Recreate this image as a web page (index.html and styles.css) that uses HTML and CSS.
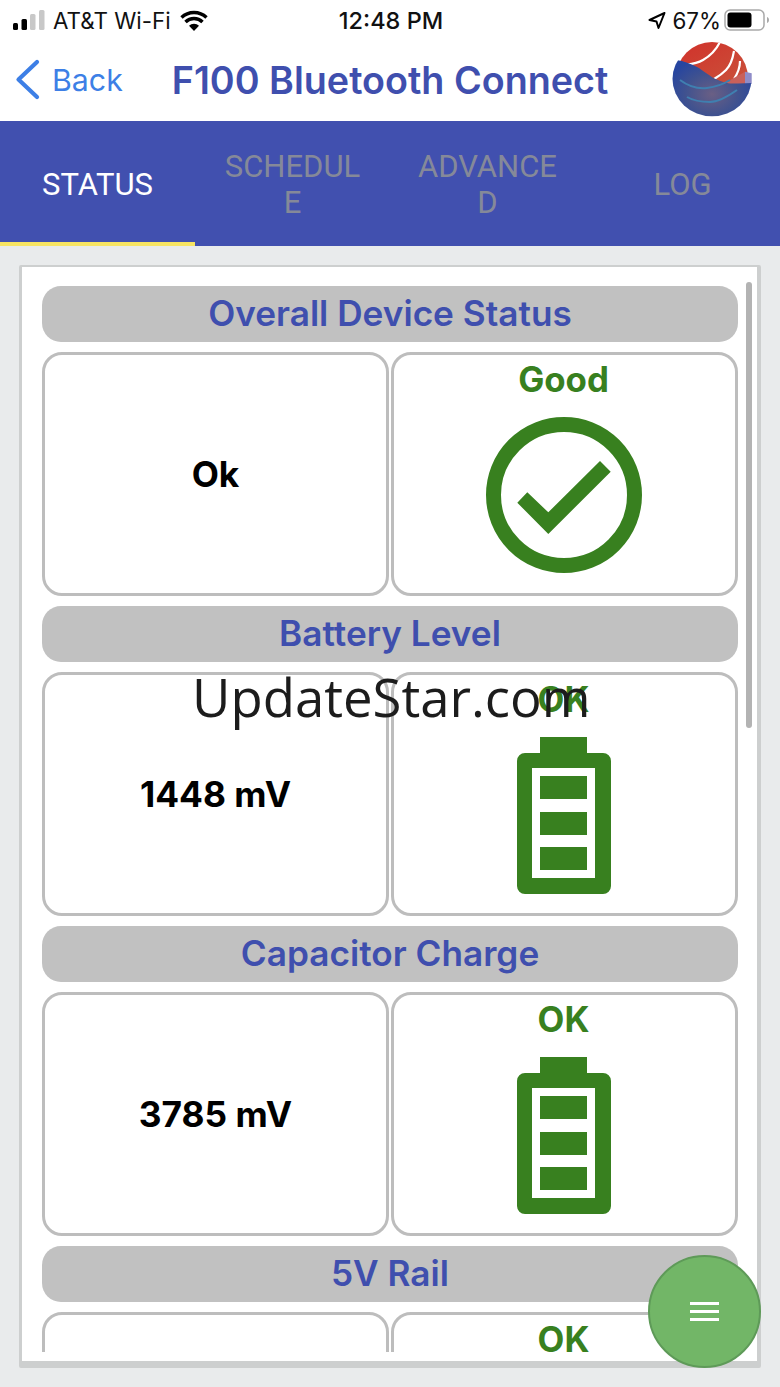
FILE: index.html
```html
<!DOCTYPE html>
<html lang="en">
<head>
<meta charset="utf-8">
<title>F100 Bluetooth Connect</title>
<link rel="stylesheet" href="styles.css">
</head>
<body>
<div class="status-bar">
  <div class="status-left">
    <svg class="signal" width="32" height="20" viewBox="0 0 32 20"><rect x="0" y="13" width="5" height="7" rx="1.500" fill="#000"/><rect x="8.500" y="9" width="5.500" height="11" rx="1.500" fill="#000"/><rect x="17" y="4" width="5.500" height="16" rx="1.500" fill="#c8c8c8"/><rect x="26" y="0" width="5.500" height="20" rx="1.500" fill="#c8c8c8"/></svg>
    <span>AT&amp;T Wi-Fi</span>
    <svg class="wifi" width="28" height="21" viewBox="0 0 28 21"><path d="M1.500 7.500a18 18 0 0 1 25 0M5.500 12a12 12 0 0 1 17 0" fill="none" stroke="#000" stroke-width="3.400"/><path d="M14 21l-5-5.200a7 7 0 0 1 10 0z" fill="#000"/></svg>
  </div>
  <div class="status-time">12:48 PM</div>
  <div class="status-right">
    <svg width="18" height="19" viewBox="0 0 18 19"><path d="M16.500 2L1.500 9l7 1.500L10.500 17z" fill="none" stroke="#000" stroke-width="2" stroke-linejoin="round"/></svg>
    <span>67%</span>
    <svg class="battery" width="46" height="22" viewBox="0 0 46 22"><rect x="1" y="1" width="39" height="20" rx="5" fill="#fff" stroke="#a9a9a9" stroke-width="1.500"/><rect x="3.500" y="3.500" width="24" height="15" rx="3" fill="#000"/><path d="M43 8v6c1.500-.5 2-1.800 2-3s-.5-2.500-2-3z" fill="#a9a9a9"/></svg>
  </div>
</div>
<header class="nav">
  <a class="back">
    <svg width="26" height="42" viewBox="0 0 26 42"><path d="M22 3L3.500 20.500L22 38" fill="none" stroke="#3d7fe6" stroke-width="4.200" stroke-linecap="round" stroke-linejoin="round"/></svg>
    <span>Back</span>
  </a>
  <h1 class="title">F100 Bluetooth Connect</h1>
  <svg class="logo" width="80" height="75" viewBox="0 0 80 75">
    <defs>
      <clipPath id="ball"><ellipse cx="40" cy="37" rx="39.500" ry="37.300"/></clipPath>
      <clipPath id="dome"><circle cx="40" cy="36" r="36"/></clipPath>
      <radialGradient id="sea" cx=".5" cy=".55" r=".6"><stop offset="0" stop-color="#6a5f84"/><stop offset=".55" stop-color="#40528f"/><stop offset="1" stop-color="#2645a0"/></radialGradient>
      <linearGradient id="sun" x1="0" y1="0" x2="1" y2="1"><stop offset="0" stop-color="#d1302a"/><stop offset="1" stop-color="#c9553c"/></linearGradient>
    </defs>
    <g clip-path="url(#dome)">
      <rect x="0" y="0" width="80" height="45" fill="url(#sun)"/>
      <path d="M48 0C44 8 38 14 31 18S20 22 12 23M62 9C61 15 59 23 54 28S47 34 42 37M68 19C68 25 66 31 62 37" fill="none" stroke="#fff" stroke-width="2.200"/>
    </g>
    <path d="M60 37L70 31.500L73 29.700V42H52z" fill="#c9605a"/>
    <path d="M73 29.700L79.700 31.300V42H73z" fill="#8f8cc8"/>
    <g clip-path="url(#ball)">
      <path d="M4 18C12 19 19 22 25 25S38 35 46 38S58 42 66 41.500L80 41V80H0V18z" fill="url(#sea)"/>
      <path d="M8 38C16 44 26 47 35 46S50 43 58 38M15 55C22 59 30 60 38 60S55 55 65 48" fill="none" stroke="#3f7fb0" stroke-width="2"/>
    </g>
  </svg>
</header>
<nav class="tabs">
  <div class="tab tab-active">STATUS</div>
  <div class="tab">SCHEDULE</div>
  <div class="tab">ADVANCED</div>
  <div class="tab">LOG</div>
</nav>
<main class="page">
  <section class="card">
    <div class="scroll">
      <h2 class="section-head">Overall Device Status</h2>
      <div class="row">
        <div class="cell cell-value">Ok</div>
        <div class="cell cell-state">
          <div class="state-label">Good</div>
          <svg class="state-icon" width="156" height="156" viewBox="0 0 156 156"><circle cx="78" cy="78" r="70.500" fill="none" stroke="#38801f" stroke-width="15"/><path d="M31.300 85.700L41.300 75.300L62.300 95.300L114 44L124.700 54.700L62.300 117z" fill="#38801f"/></svg>
        </div>
      </div>
      <h2 class="section-head">Battery Level</h2>
      <div class="row">
        <div class="cell cell-value">1448 mV</div>
        <div class="cell cell-state">
          <div class="state-label">OK</div>
          <svg class="state-icon" width="94" height="157" viewBox="0 0 94 157"><path d="M23 0h47v16h16a8 8 0 0 1 8 8v125a8 8 0 0 1-8 8H8a8 8 0 0 1-8-8V24a8 8 0 0 1 8-8h15z" fill="#38801f"/><rect x="15" y="31" width="63" height="110" fill="#fff"/><rect x="23" y="39" width="47" height="23" fill="#38801f"/><rect x="23" y="75" width="47" height="23" fill="#38801f"/><rect x="23" y="110" width="47" height="23" fill="#38801f"/></svg>
        </div>
      </div>
      <h2 class="section-head">Capacitor Charge</h2>
      <div class="row">
        <div class="cell cell-value">3785 mV</div>
        <div class="cell cell-state">
          <div class="state-label">OK</div>
          <svg class="state-icon" width="94" height="157" viewBox="0 0 94 157"><path d="M23 0h47v16h16a8 8 0 0 1 8 8v125a8 8 0 0 1-8 8H8a8 8 0 0 1-8-8V24a8 8 0 0 1 8-8h15z" fill="#38801f"/><rect x="15" y="31" width="63" height="110" fill="#fff"/><rect x="23" y="39" width="47" height="23" fill="#38801f"/><rect x="23" y="75" width="47" height="23" fill="#38801f"/><rect x="23" y="110" width="47" height="23" fill="#38801f"/></svg>
        </div>
      </div>
      <h2 class="section-head">5V Rail</h2>
      <div class="row">
        <div class="cell cell-value"></div>
        <div class="cell cell-state">
          <div class="state-label">OK</div>
        </div>
      </div>
    </div>
    <div class="scrollbar"></div>
  </section>
</main>
<div class="watermark">UpdateStar.com</div>
<button class="fab" type="button" aria-label="Menu"><span class="fab-lines"></span></button>
</body>
</html>
```
FILE: styles.css
```css
* { box-sizing: border-box; }
html, body { margin: 0; height: 1387px; overflow: hidden; }
body {
  width: 780px;
  background: #e9ebec;
  font-family: Inter, "Liberation Sans", sans-serif;
  position: relative;
  display: flex;
  flex-direction: column;
}
.status-bar {
  height: 40px;
  background: #fff;
  display: grid;
  grid-template-columns: 1fr auto 1fr;
  align-items: center;
  padding: 0 10px 0 13px;
  font-size: 22.400px;
  color: #111;
}
.status-left { display: flex; align-items: center; gap: 8px; }
.wifi { margin-left: 1px; }
.status-time { font-weight: 500; font-size: 23.500px; margin-right: 1px; }
.status-right { display: flex; justify-content: flex-end; align-items: center; gap: 6px; }
.battery { margin-left: -3px; }
.nav {
  height: 81px;
  background: #fff;
  display: flex;
  align-items: center;
  padding: 0 28px 2px 15px;
}
.back { display: flex; align-items: center; gap: 11px; color: #3d7fe6; font-size: 30.300px; }
.title {
  margin: 0 0 0 49px;
  font-size: 37.700px;
  font-weight: 600;
  color: #3f4fae;
  white-space: nowrap;
}
.logo { margin-left: auto; overflow: visible; }
.tabs {
  height: 125px;
  background: #4150af;
  display: grid;
  grid-template-columns: repeat(4, 195px);
}
.tab {
  display: flex;
  align-items: center;
  justify-content: center;
  text-align: center;
  padding: 2px 26px 0;
  font-family: Roboto, sans-serif;
  font-size: 31px;
  line-height: 36px;
  color: #858999;
  word-break: break-all;
}
.tab-active { color: #fff; border-bottom: 4px solid #f7e463; padding-top: 6px; }
.page { flex: 1; padding: 19px; min-height: 0; }
.card {
  height: 1103px;
  background: #fff;
  border: solid #cdcfcf;
  border-width: 2px 4px 7px 3px;
  border-radius: 2px;
  padding: 19px 19px 9px 20px;
  position: relative;
}
.scroll { height: 100%; overflow: hidden; display: flex; flex-direction: column; gap: 10px; }
.section-head {
  margin: 0;
  flex: 0 0 56px;
  background: #c1c1c1;
  border-radius: 19px;
  color: #3f4fae;
  font-size: 35.200px;
  font-weight: 600;
  line-height: 55px;
  text-align: center;
}
.row { flex: 0 0 244px; display: grid; grid-template-columns: 347px 347px; gap: 2px; }
.cell { border: 3px solid #bdbdbd; border-radius: 20px; background: #fff; }
.cell-value {
  display: flex;
  align-items: center;
  justify-content: center;
  font-size: 35.300px;
  font-weight: 700;
  color: #000;
}
.cell-state { display: flex; flex-direction: column; align-items: center; padding-right: 2px; }
.state-label { height: 50px; line-height: 48px; font-size: 34.800px; font-weight: 700; color: #38801f; }
.state-icon { margin-top: 12px; }
.scrollbar {
  position: absolute;
  top: 15px;
  right: 5px;
  width: 6px;
  height: 446px;
  border-radius: 3px;
  background: #b3b3b3;
}
.watermark {
  position: absolute;
  left: 192px;
  top: 659px;
  font-family: "Open Sans", sans-serif;
  font-size: 52.700px;
  line-height: 76px;
  color: #1c1c1c;
  white-space: nowrap;
}
.fab {
  position: absolute;
  left: 648px;
  top: 1255px;
  width: 113px;
  height: 113px;
  border-radius: 50%;
  border: 2px solid #5e9a58;
  background: #72b667;
  padding: 0 1px 0 0;
  display: flex;
  align-items: center;
  justify-content: center;
}
.fab-lines {
  display: block;
  width: 29px;
  height: 19px;
  border-top: 3px solid #fff;
  border-bottom: 3px solid #fff;
  position: relative;
}
.fab-lines::before {
  content: "";
  position: absolute;
  left: 0;
  right: 0;
  top: 5px;
  height: 3px;
  background: #fff;
}
```
